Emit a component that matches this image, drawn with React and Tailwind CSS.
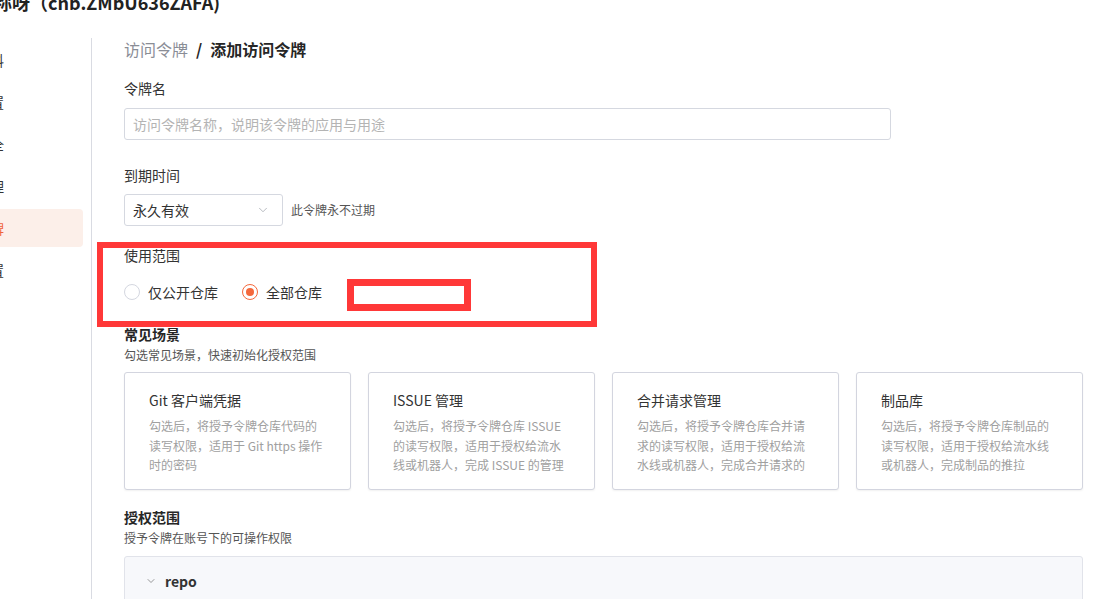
import { ChevronDown } from 'lucide-react'

const menu = ['个人资料', '偏好设置', '账号安全', '仓库管理', '访问令牌', '通知设置']

const scenes = [
  {
    title: 'Git 客户端凭据',
    desc: '勾选后，将授予令牌仓库代码的读写权限，适用于 Git https 操作时的密码',
  },
  {
    title: 'ISSUE 管理',
    desc: '勾选后，将授予令牌仓库 ISSUE 的读写权限，适用于授权给流水线或机器人，完成 ISSUE 的管理',
  },
  {
    title: '合并请求管理',
    desc: '勾选后，将授予令牌仓库合并请求的读写权限，适用于授权给流水线或机器人，完成合并请求的管理',
  },
  {
    title: '制品库',
    desc: '勾选后，将授予令牌仓库制品的读写权限，适用于授权给流水线或机器人，完成制品的推拉',
  },
]

const Radio = ({ checked, label }) => (
  <label className="flex items-center gap-2 text-[14px] leading-5 text-[#333]">
    {checked ? (
      <span className="flex h-4 w-4 items-center justify-center rounded-full border border-[#f4683c]">
        <span className="h-2 w-2 rounded-full bg-[#f4683c]" />
      </span>
    ) : (
      <span className="h-4 w-4 rounded-full border border-[#d4d7e0] bg-white" />
    )}
    {label}
  </label>
)

const SceneCard = ({ title, desc }) => (
  <div className="h-[118px] rounded-[3px] border border-[#d3d5df] bg-white px-6 pt-[17px] shadow-[0_1px_2px_rgba(0,0,0,0.06)]">
    <p className="text-[14px] leading-5 text-[#333]">{title}</p>
    <p className="mt-[6px] h-[58px] overflow-hidden text-[12px] leading-[19.5px] text-[#a0a0a0]">
      {desc}
    </p>
  </div>
)

export default function App() {
  return (
    <div
      className="h-[599px] w-[1094px] overflow-hidden bg-white"
      style={{ fontFamily: '"Noto Sans CJK SC", "Noto Sans", sans-serif' }}
    >
      <div className="-ml-[68px]">
        {/* account title */}
        <h1 className="-mt-[9px] h-[47px] pl-[8px] text-[18px] font-bold leading-[22px] text-[#222]">
          用户昵称呀（cnb.ZMbU636ZAFA)
        </h1>

        <div className="flex">
          {/* settings menu */}
          <aside className="w-[151px] shrink-0 pt-[3px]">
            <ul className="flex flex-col gap-1">
              {menu.map((item) => (
                <li
                  key={item}
                  className={
                    item === '访问令牌'
                      ? 'flex h-[38px] items-center rounded-r-[4px] bg-[#fcefe9] pl-4 text-[14px] text-[#f0643c]'
                      : 'flex h-[38px] items-center pl-4 text-[14px] text-[#333]'
                  }
                >
                  {item}
                </li>
              ))}
            </ul>
          </aside>

          <div className="ml-2 w-px shrink-0 self-stretch bg-[#d9dbe2]" />

          <main className="relative min-h-[600px] w-[1002px] shrink-0 pl-8 pr-[11px]">
            <div className="text-[16px] leading-[22px]">
              <span className="text-[#8a8d96]">访问令牌</span>
              <span className="mx-2 font-bold text-[#262626]">/</span>
              <span className="font-bold text-[#262626]">添加访问令牌</span>
            </div>

            <p className="mt-[18px] text-[14px] leading-5 text-[#333]">令牌名</p>
            <input
              className="mt-[10px] h-8 w-[767px] rounded-[3px] border border-[#d5d8e0] px-2 text-[14px] outline-none placeholder:text-[#b4b4b4]"
              placeholder="访问令牌名称，说明该令牌的应用与用途"
            />

            <p className="mt-[25px] text-[14px] leading-5 text-[#333]">到期时间</p>
            <div className="mt-[9px] flex items-center gap-2">
              <div className="flex h-8 w-[159px] items-center justify-between rounded-[3px] border border-[#d5d8e0] pl-2 pr-3 text-[14px] text-[#333]">
                永久有效
                <ChevronDown size={14} strokeWidth={1.2} className="text-[#9a9da6]" />
              </div>
              <span className="text-[12px] text-[#555]">此令牌永不过期</span>
            </div>

            <p className="mt-[19px] text-[14px] leading-5 text-[#333]">使用范围</p>
            <div className="mt-[17px] flex items-center gap-[24px]">
              <Radio label="仅公开仓库" />
              <Radio checked label="全部仓库" />
            </div>

            <h2 className="mt-[22px] text-[14px] font-bold leading-5 text-[#262626]">常见场景</h2>
            <p className="mt-[1px] text-[12px] leading-5 text-[#555]">勾选常见场景，快速初始化授权范围</p>
            <div className="mt-[7px] grid grid-cols-4 gap-[17px]">
              {scenes.map((s) => (
                <SceneCard key={s.title} {...s} />
              ))}
            </div>

            <h2 className="mt-[17px] text-[14px] font-bold leading-5 text-[#262626]">授权范围</h2>
            <p className="mt-px text-[12px] leading-5 text-[#555]">授予令牌在账号下的可操作权限</p>
            <div className="mt-2 h-[80px] rounded-t-[3px] border border-[#e1e3ea] bg-[#f7f8fb] px-5 pt-[14px]">
              <div className="flex items-center gap-2 text-[14px] font-bold leading-5 text-[#333]">
                <ChevronDown size={12} strokeWidth={1.5} className="text-[#777]" />
                repo
              </div>
            </div>

            {/* highlight marks */}
            <div className="absolute left-[5px] top-[204px] h-[85px] w-[500px] border-[6px] border-[#ff3838]" />
            <div className="absolute left-[255px] top-[241px] h-[32px] w-[124px] border-[7px] border-[#ff3838] bg-white" />
          </main>
        </div>
      </div>
    </div>
  )
}
